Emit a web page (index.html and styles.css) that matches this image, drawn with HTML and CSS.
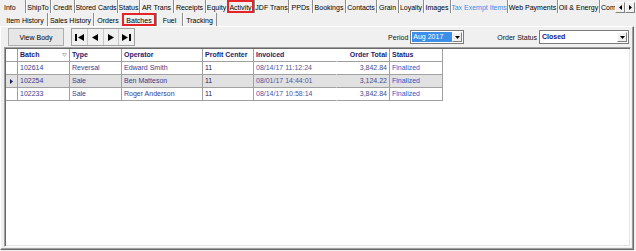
FILE: index.html
```html
<!DOCTYPE html>
<html>
<head>
<meta charset="utf-8">
<link rel="stylesheet" href="styles.css">
</head>
<body>
<div class="app">
  <div class="tabs tabs-main">
    <div class="tab first">Info</div>
    <div class="tab">ShipTo</div>
    <div class="tab">Credit</div>
    <div class="tab">Stored Cards</div>
    <div class="tab">Status</div>
    <div class="tab">AR Trans</div>
    <div class="tab">Receipts</div>
    <div class="tab">Equity</div>
    <div class="tab hl">Activity</div>
    <div class="tab">JDF Trans</div>
    <div class="tab">PPDs</div>
    <div class="tab">Bookings</div>
    <div class="tab">Contacts</div>
    <div class="tab">Grain</div>
    <div class="tab">Loyalty</div>
    <div class="tab">Images</div>
    <div class="tab link">Tax Exempt Items</div>
    <div class="tab">Web Payments</div>
    <div class="tab">Oil &amp; Energy</div>
    <div class="tab clip">Com</div>
    <div class="scrollers">
      <span class="sbtn"><svg width="3" height="5" viewBox="0 0 3 5"><polygon points="3,0 0,2.5 3,5" fill="#000"/></svg></span>
      <span class="sbtn"><svg width="3" height="5" viewBox="0 0 3 5"><polygon points="0,0 3,2.5 0,5" fill="#000"/></svg></span>
    </div>
  </div>
  <div class="tabs tabs-sub">
    <div class="tab first">Item History</div>
    <div class="tab">Sales History</div>
    <div class="tab">Orders</div>
    <div class="tab hl">Batches</div>
    <div class="tab">Fuel</div>
    <div class="tab last">Tracking</div>
  </div>
  <div class="panel">
    <div class="toolbar">
      <button class="btn view-body">View Body</button>
      <div class="nav">
        <span class="nbtn"><svg width="9" height="7" viewBox="0 0 9 7"><rect x="0" y="0" width="2" height="7" fill="#000"/><polygon points="9,0 3,3.5 9,7" fill="#000"/></svg></span>
        <span class="nbtn"><svg width="6" height="7" viewBox="0 0 6 7"><polygon points="6,0 0,3.5 6,7" fill="#000"/></svg></span>
        <span class="nbtn"><svg width="6" height="7" viewBox="0 0 6 7"><polygon points="0,0 6,3.5 0,7" fill="#000"/></svg></span>
        <span class="nbtn"><svg width="9" height="7" viewBox="0 0 9 7"><polygon points="0,0 6,3.5 0,7" fill="#000"/><rect x="7" y="0" width="2" height="7" fill="#000"/></svg></span>
      </div>
      <div class="filters">
        <span class="lbl">Period</span>
        <div class="combo period">
          <span class="sel">Aug 2017</span>
          <span class="ddbtn"><svg width="5" height="3" viewBox="0 0 5 3"><polygon points="0,0 5,0 2.5,3" fill="#000"/></svg></span>
        </div>
        <span class="lbl lbl-status">Order Status</span>
        <div class="combo status">
          <span class="val">Closed</span>
          <span class="ddbtn"><svg width="5" height="3" viewBox="0 0 5 3"><polygon points="0,0 5,0 2.5,3" fill="#000"/></svg></span>
        </div>
      </div>
    </div>
    <div class="grid">
      <div class="row head">
        <div class="c rh"></div>
        <div class="c">Batch<svg class="sort" width="5" height="4" viewBox="0 0 5 4"><polygon points="0.5,0.5 4.5,0.5 2.5,3.5" fill="none" stroke="#a8a8a8" stroke-width="0.8"/></svg></div>
        <div class="c">Type</div>
        <div class="c">Operator</div>
        <div class="c">Profit Center</div>
        <div class="c nosep">Invoiced</div>
        <div class="c num">Order Total</div>
        <div class="c">Status</div>
      </div>
      <div class="row">
        <div class="c rh"></div>
        <div class="c">102614</div>
        <div class="c">Reversal</div>
        <div class="c">Edward Smith</div>
        <div class="c pc">11</div>
        <div class="c inv nosep">08/14/17 11:12:24</div>
        <div class="c num tot">3,842.84</div>
        <div class="c st">Finalized</div>
      </div>
      <div class="row sel">
        <div class="c rh"><svg width="3" height="5" viewBox="0 0 3 5"><polygon points="0,0 3,2.5 0,5" fill="#1a1a5a"/></svg></div>
        <div class="c">102254</div>
        <div class="c">Sale</div>
        <div class="c">Ben Matteson</div>
        <div class="c pc">11</div>
        <div class="c inv nosep">08/01/17 14:44:01</div>
        <div class="c num tot">3,124.22</div>
        <div class="c st">Finalized</div>
      </div>
      <div class="row">
        <div class="c rh"></div>
        <div class="c">102233</div>
        <div class="c">Sale</div>
        <div class="c">Roger Anderson</div>
        <div class="c pc">11</div>
        <div class="c inv nosep">08/14/17 10:58:14</div>
        <div class="c num tot">3,842.84</div>
        <div class="c st">Finalized</div>
      </div>
    </div>
  </div>
</div>
</body>
</html>
```

FILE: styles.css
```css
* { box-sizing: border-box; }
html, body { margin: 0; padding: 0; }
body {
  width: 636px;
  height: 251px;
  overflow: hidden;
  background: #f0f0f0;
  font-family: "Liberation Sans", Arial, sans-serif;
  font-size: 7px;
  color: #000;
}
.app {
  width: 636px;
  height: 251px;
  display: flex;
  flex-direction: column;
}

/* tab strips */
.tabs {
  display: grid;
  height: 13px;
  flex: none;
}
.tabs-main {
  grid-template-columns: 25px 25px 24px 43px 22px 34px 32px 22px 27px 34px 24px 33px 31px 22px 25px 27px 57px 50px 42px 1fr 20px;
  padding-right: 1px;
}
.tabs-sub {
  grid-template-columns: 44px 46px 29px 34px 26px 35px 1fr;
  padding-left: 3px;
}
.tab {
  display: flex;
  align-items: center;
  justify-content: center;
  white-space: nowrap;
  overflow: hidden;
  line-height: 13px;
  padding-top: 1px;
  border-left: 1px solid #8c8c8c;
  box-shadow: inset 1px 0 #ffffff;
}
.tab.first {
  border-left: none;
  box-shadow: none;
}
.tabs-main .tab.first {
  justify-content: flex-start;
  padding-left: 4px;
}
.tab.last { border-right: 1px solid #8c8c8c; }
.tab.clip { justify-content: flex-start; padding-left: 1px; }
.tab.link { color: #3a8ee8; }
.tab.hl {
  border: 2px solid #e5242a;
  box-shadow: none;
}
.scrollers {
  display: flex;
  align-items: center;
  padding-top: 1px;
}
.sbtn {
  width: 10px;
  height: 11px;
  display: flex;
  align-items: center;
  justify-content: center;
  background: #f0f0f0;
  border: 1px solid;
  border-color: #ffffff #808080 #808080 #ffffff;
}

/* panel */
.panel {
  flex: 1;
  width: 634px;
  margin-bottom: 1px;
  display: flex;
  flex-direction: column;
  border: 1px solid;
  border-color: #ffffff #696969 #696969 #ffffff;
  box-shadow: inset -1px -1px #a0a0a0;
  padding: 1px 2px 2px 3px;
}
.toolbar {
  height: 18px;
  display: flex;
  align-items: stretch;
  flex: none;
}
.btn {
  font: inherit;
  color: #000;
  margin: 0 0 0 4px;
  width: 56px;
  padding: 0;
  background: #e6e6e6;
  border: 1px solid #adadad;
  border-radius: 0;
}
.nav {
  margin-left: 7px;
  width: 64px;
  display: flex;
  border: 1px solid #a0a0a0;
  background: #f0f0f0;
}
.nbtn {
  flex: 1;
  display: flex;
  align-items: center;
  justify-content: center;
  border-left: 1px solid #c8c8c8;
}
.nbtn:first-child { border-left: none; }

.filters {
  margin-left: auto;
  display: flex;
  align-items: center;
  padding-right: 2px;
}
.lbl { margin-right: 2px; color: #111; }
.lbl-status { margin-left: 33px; }
.combo {
  height: 14px;
  display: flex;
  align-items: stretch;
  background: #ffffff;
  border: 1px solid #7a7a7a;
  padding: 1px;
}
.combo.period { width: 54px; }
.combo.status { width: 90px; }
.combo .sel {
  flex: 1;
  background: #3d8ee8;
  color: #ffffff;
  padding-left: 1px;
  line-height: 10px;
}
.combo .val {
  flex: 1;
  color: #14148a;
  font-weight: bold;
  padding-left: 1px;
  line-height: 10px;
}
.ddbtn {
  width: 10px;
  display: flex;
  align-items: center;
  justify-content: center;
  background: #f0f0f0;
  border: 1px solid;
  border-color: #ffffff #808080 #808080 #ffffff;
}

/* data grid */
.grid {
  flex: 1;
  margin-top: 1px;
  background: #ffffff;
  border: 1px solid;
  border-color: #a0a0a0 #ffffff #ffffff #a0a0a0;
  box-shadow: inset 1px 1px #696969, inset -1px -1px #e3e3e3;
  padding: 1px 0 0 1px;
}
.row {
  display: grid;
  grid-template-columns: 12px 52px 52px 81px 51px 83px 53px 53px;
  width: 437px;
  height: 13px;
  color: #3c3c8e;
}
.row.head {
  height: 13px;
  color: #1c1c6e;
  font-weight: bold;
}
.row.sel .c { background: #e1e1e1; }
.c {
  border-right: 1px solid #a0a0a0;
  border-bottom: 1px solid #a0a0a0;
  padding: 0 2px;
  line-height: 12px;
  white-space: nowrap;
  overflow: hidden;
  display: flex;
  align-items: center;
}
.c.nosep { border-right-color: transparent; }
.c.num { justify-content: flex-end; }
.c.rh { justify-content: center; padding: 0; }
.head .c { position: relative; }
.sort { margin-left: auto; margin-right: 0; }
.pc { color: #22225e; }
.inv { color: #54549e; }
.tot { color: #4a4a86; }
.st { color: #3256c6; }
```
